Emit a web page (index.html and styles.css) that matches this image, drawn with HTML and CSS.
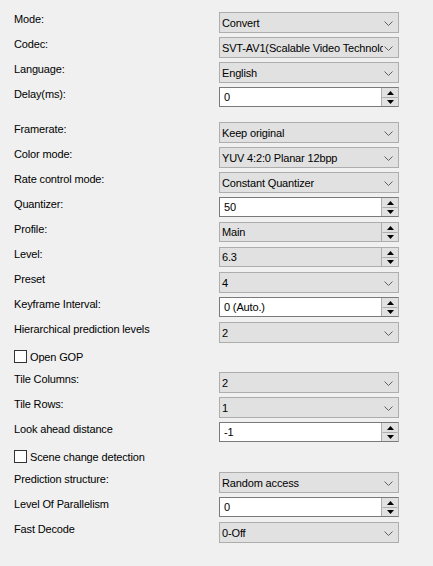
FILE: index.html
```html
<!DOCTYPE html>
<html>
<head>
<meta charset="utf-8">
<link rel="stylesheet" href="styles.css">
</head>
<body>
<div class="form">
  <div class="group">
    <div class="row"><span class="label">Mode:</span><div class="combo"><span class="val">Convert</span><span class="chev"><svg width="9" height="5" viewBox="0 0 9 5"><polyline points="0.5,0.5 4.5,4.5 8.5,0.5" fill="none" stroke="#606060" stroke-width="1"/></svg></span></div></div>
    <div class="row"><span class="label">Codec:</span><div class="combo"><span class="val">SVT-AV1(Scalable Video Technolo</span><span class="chev"><svg width="9" height="5" viewBox="0 0 9 5"><polyline points="0.5,0.5 4.5,4.5 8.5,0.5" fill="none" stroke="#606060" stroke-width="1"/></svg></span></div></div>
    <div class="row"><span class="label">Language:</span><div class="combo"><span class="val">English</span><span class="chev"><svg width="9" height="5" viewBox="0 0 9 5"><polyline points="0.5,0.5 4.5,4.5 8.5,0.5" fill="none" stroke="#606060" stroke-width="1"/></svg></span></div></div>
    <div class="row"><span class="label">Delay(ms):</span><div class="spin"><span class="edit">0</span><span class="btns"><span class="btn"><svg width="7" height="4" viewBox="0 0 7 4"><polygon points="0,4 3.5,0 7,4" fill="#000"/></svg></span><span class="btn"><svg width="7" height="4" viewBox="0 0 7 4"><polygon points="0,0 3.5,4 7,0" fill="#000"/></svg></span></span></div></div>
  </div>
  <div class="group second">
    <div class="row"><span class="label">Framerate:</span><div class="combo"><span class="val">Keep original</span><span class="chev"><svg width="9" height="5" viewBox="0 0 9 5"><polyline points="0.5,0.5 4.5,4.5 8.5,0.5" fill="none" stroke="#606060" stroke-width="1"/></svg></span></div></div>
    <div class="row"><span class="label">Color mode:</span><div class="combo"><span class="val">YUV 4:2:0 Planar 12bpp</span><span class="chev"><svg width="9" height="5" viewBox="0 0 9 5"><polyline points="0.5,0.5 4.5,4.5 8.5,0.5" fill="none" stroke="#606060" stroke-width="1"/></svg></span></div></div>
    <div class="row"><span class="label">Rate control mode:</span><div class="combo"><span class="val">Constant Quantizer</span><span class="chev"><svg width="9" height="5" viewBox="0 0 9 5"><polyline points="0.5,0.5 4.5,4.5 8.5,0.5" fill="none" stroke="#606060" stroke-width="1"/></svg></span></div></div>
    <div class="row"><span class="label">Quantizer:</span><div class="spin"><span class="edit">50</span><span class="btns"><span class="btn"><svg width="7" height="4" viewBox="0 0 7 4"><polygon points="0,4 3.5,0 7,4" fill="#000"/></svg></span><span class="btn"><svg width="7" height="4" viewBox="0 0 7 4"><polygon points="0,0 3.5,4 7,0" fill="#000"/></svg></span></span></div></div>
    <div class="row"><span class="label">Profile:</span><div class="spin ro"><span class="edit">Main</span><span class="btns"><span class="btn"><svg width="7" height="4" viewBox="0 0 7 4"><polygon points="0,4 3.5,0 7,4" fill="#000"/></svg></span><span class="btn"><svg width="7" height="4" viewBox="0 0 7 4"><polygon points="0,0 3.5,4 7,0" fill="#000"/></svg></span></span></div></div>
    <div class="row"><span class="label">Level:</span><div class="spin ro"><span class="edit">6.3</span><span class="btns"><span class="btn"><svg width="7" height="4" viewBox="0 0 7 4"><polygon points="0,4 3.5,0 7,4" fill="#000"/></svg></span><span class="btn"><svg width="7" height="4" viewBox="0 0 7 4"><polygon points="0,0 3.5,4 7,0" fill="#000"/></svg></span></span></div></div>
    <div class="row"><span class="label">Preset</span><div class="combo"><span class="val">4</span><span class="chev"><svg width="9" height="5" viewBox="0 0 9 5"><polyline points="0.5,0.5 4.5,4.5 8.5,0.5" fill="none" stroke="#606060" stroke-width="1"/></svg></span></div></div>
    <div class="row"><span class="label">Keyframe Interval:</span><div class="spin"><span class="edit">0 (Auto.)</span><span class="btns"><span class="btn"><svg width="7" height="4" viewBox="0 0 7 4"><polygon points="0,4 3.5,0 7,4" fill="#000"/></svg></span><span class="btn"><svg width="7" height="4" viewBox="0 0 7 4"><polygon points="0,0 3.5,4 7,0" fill="#000"/></svg></span></span></div></div>
    <div class="row"><span class="label">Hierarchical prediction levels</span><div class="combo"><span class="val">2</span><span class="chev"><svg width="9" height="5" viewBox="0 0 9 5"><polyline points="0.5,0.5 4.5,4.5 8.5,0.5" fill="none" stroke="#606060" stroke-width="1"/></svg></span></div></div>
    <div class="row check"><span class="box"></span><span class="ctext">Open GOP</span></div>
    <div class="row"><span class="label">Tile Columns:</span><div class="combo"><span class="val">2</span><span class="chev"><svg width="9" height="5" viewBox="0 0 9 5"><polyline points="0.5,0.5 4.5,4.5 8.5,0.5" fill="none" stroke="#606060" stroke-width="1"/></svg></span></div></div>
    <div class="row"><span class="label">Tile Rows:</span><div class="combo"><span class="val">1</span><span class="chev"><svg width="9" height="5" viewBox="0 0 9 5"><polyline points="0.5,0.5 4.5,4.5 8.5,0.5" fill="none" stroke="#606060" stroke-width="1"/></svg></span></div></div>
    <div class="row"><span class="label">Look ahead distance</span><div class="spin"><span class="edit">-1</span><span class="btns"><span class="btn"><svg width="7" height="4" viewBox="0 0 7 4"><polygon points="0,4 3.5,0 7,4" fill="#000"/></svg></span><span class="btn"><svg width="7" height="4" viewBox="0 0 7 4"><polygon points="0,0 3.5,4 7,0" fill="#000"/></svg></span></span></div></div>
    <div class="row check"><span class="box"></span><span class="ctext">Scene change detection</span></div>
    <div class="row"><span class="label">Prediction structure:</span><div class="combo"><span class="val">Random access</span><span class="chev"><svg width="9" height="5" viewBox="0 0 9 5"><polyline points="0.5,0.5 4.5,4.5 8.5,0.5" fill="none" stroke="#606060" stroke-width="1"/></svg></span></div></div>
    <div class="row"><span class="label">Level Of Parallelism</span><div class="spin"><span class="edit">0</span><span class="btns"><span class="btn"><svg width="7" height="4" viewBox="0 0 7 4"><polygon points="0,4 3.5,0 7,4" fill="#000"/></svg></span><span class="btn"><svg width="7" height="4" viewBox="0 0 7 4"><polygon points="0,0 3.5,4 7,0" fill="#000"/></svg></span></span></div></div>
    <div class="row"><span class="label">Fast Decode</span><div class="combo"><span class="val">0-Off</span><span class="chev"><svg width="9" height="5" viewBox="0 0 9 5"><polyline points="0.5,0.5 4.5,4.5 8.5,0.5" fill="none" stroke="#606060" stroke-width="1"/></svg></span></div></div>
  </div>
</div>
</body>
</html>
```

FILE: styles.css
```css
html, body {
  margin: 0;
  padding: 0;
  background: #f0f0f0;
}
body {
  font-family: "Liberation Sans", Arial, sans-serif;
  font-size: 11px;
  letter-spacing: -0.15px;
  color: #000;
}
.form {
  padding: 12px 0 0 14px;
}
.group {
  display: flex;
  flex-direction: column;
  gap: 4px;
}
.group.second {
  margin-top: 14px;
}
.row {
  display: grid;
  grid-template-columns: 205px 180px;
  height: 21px;
}
.label {
  line-height: 13px;
  padding-top: 1px;
  white-space: nowrap;
}
.combo {
  box-sizing: border-box;
  height: 21px;
  border: 1px solid #adadad;
  background: #e1e1e1;
  display: flex;
  align-items: center;
}
.combo .val {
  flex: 1;
  min-width: 0;
  padding-left: 2px;
  padding-top: 1px;
  white-space: nowrap;
  overflow: hidden;
  line-height: 13px;
}
.chev {
  width: 14px;
  flex: none;
  display: flex;
  align-items: center;
  justify-content: flex-start;
  padding-left: 1px;
  padding-top: 1px;
}
.chev svg { display: block; }
.spin {
  box-sizing: border-box;
  height: 20px;
  border: 1px solid #7a7a7a;
  border-right-color: #adadad;
  background: #fff;
  display: flex;
}
.spin.ro {
  border-color: #adadad;
  background: #e1e1e1;
}
.spin .edit {
  flex: 1;
  padding-left: 4px;
  line-height: 18px;
  white-space: nowrap;
  overflow: hidden;
}
.spin.ro .edit {
  padding-left: 2px;
}
.btns {
  width: 17px;
  flex: none;
  display: flex;
  flex-direction: column;
  background: #e1e1e1;
  border-left: 1px solid #adadad;
  box-sizing: border-box;
}
.btn {
  flex: 1;
  display: flex;
  align-items: center;
  justify-content: center;
  box-sizing: border-box;
  border: 1px solid #e1e1e1;
}
.btn + .btn {
  border-top: 1px solid #adadad;
}
.btn svg { display: block; }
.row.check {
  display: flex;
  align-items: flex-start;
  padding-top: 3px;
  box-sizing: border-box;
}
.box {
  width: 13px;
  height: 13px;
  box-sizing: border-box;
  border: 1px solid #333;
  background: #fff;
  flex: none;
}
.ctext {
  margin-left: 3px;
  margin-top: 1px;
  line-height: 13px;
  white-space: nowrap;
}
```
